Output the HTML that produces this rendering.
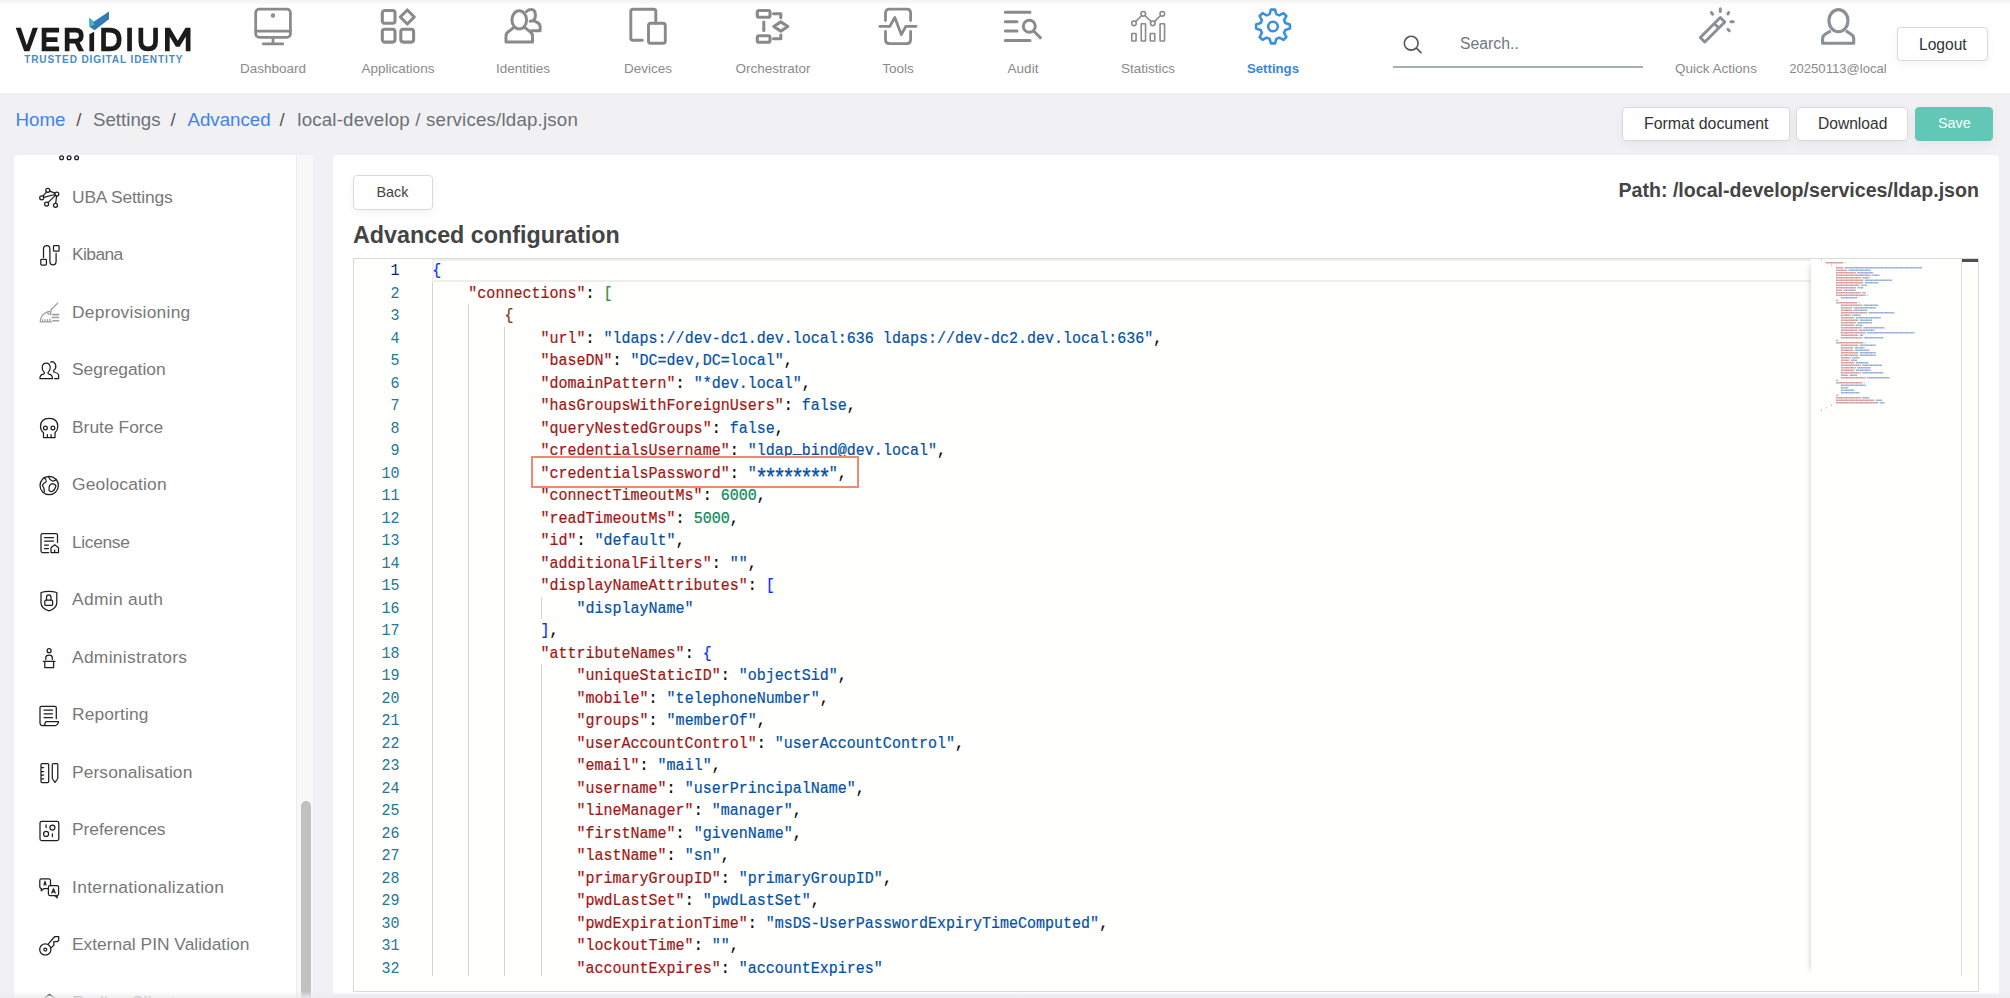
<!DOCTYPE html><html><head><meta charset="utf-8"><title>Advanced configuration</title><style>
*{box-sizing:border-box;margin:0;padding:0}
html,body{width:2010px;height:998px;overflow:hidden;background:#f1f1f3;font-family:"Liberation Sans",sans-serif;position:relative}
.a{position:absolute;white-space:pre;line-height:1}
svg{position:absolute;overflow:visible}
.btn{position:absolute;background:#fff;border:1px solid #d9d9d9;border-radius:4px;box-shadow:0 3px 10px rgba(0,0,0,0.05)}
.code{position:absolute;left:0;white-space:pre;font-family:"Liberation Mono",monospace;font-size:15.03px;line-height:22.5px;height:22.5px;color:#000;transform:scaleY(1.1);transform-origin:0 16px;-webkit-text-stroke:0.2px}
.lnum{position:absolute;left:0;width:46px;text-align:right;font-family:"Liberation Mono",monospace;font-size:15.03px;line-height:22.5px;height:22.5px;color:#237893;transform:scaleY(1.1);transform-origin:0 16px}
.k{color:#a31515}.s{color:#0451a5}.n{color:#098658}.b1{color:#0431fa}.b2{color:#319331}.b3{color:#7b3814}
.nl{position:absolute;top:61.5px;width:125px;text-align:center;font-size:13.5px;line-height:1;color:#8a8a8a}
.si{position:absolute;left:72px;font-size:17.4px;line-height:1;color:#787878;white-space:pre}
</style></head><body>
<div class="a" style="left:0;top:0;width:2010px;height:93px;background:linear-gradient(#f4f4f4 0px,#f5f5f5 1.5px,#fafafa 3.5px,#fff 5.5px)"></div>
<svg style="left:0;top:0" width="200" height="70" viewBox="0 0 200 70">
<g fill="none" stroke="#1b1b1b" stroke-width="4.7" stroke-linejoin="miter" stroke-linecap="butt">
<path d="M44.05,27.7 V51.3 M41.7,30.05 H59.1 M41.7,39.6 H57.5 M41.7,48.95 H59.1"/>
<path d="M67.15,51.3 V30.05 H75.5 Q81.3,30.05 81.3,35.6 Q81.3,41.2 75.5,41.2 H67.15"/>
<path d="M129.55,27.7 V51.3"/>
<path d="M103.55,27.7 V51.3 M101.2,30.05 H109.5 Q119.15,30.05 119.15,39.5 Q119.15,48.95 109.5,48.95 H101.2"/>
<path d="M140.85,27.7 V41.5 Q140.85,48.95 148.2,48.95 Q155.55,48.95 155.55,41.5 V27.7"/>
</g>
<g fill="#1b1b1b">
<polygon points="15.7,27.7 20.9,27.7 26.8,45.2 32.7,27.7 37.9,27.7 29.4,51.3 24.2,51.3"/>
<polygon points="73.5,40.5 78.6,40.5 84,51.3 78.6,51.3"/>
<polygon points="165,51.3 165,27.7 170,27.7 177.75,40.8 185.5,27.7 190.5,27.7 190.5,51.3 185.8,51.3 185.8,36.5 179.6,46.8 175.9,46.8 169.7,36.5 169.7,51.3"/>
<polygon points="89.4,34.2 94.1,31.8 94.1,51.3 89.4,51.3"/>
</g>
<polygon fill="#4fb2c4" points="89,17.6 94,21.6 94,24.5 89.2,26.5"/>
<polygon fill="#2f7cb6" points="94,21.6 109,11.6 109,19.2 94.6,30.3 89.2,26.5 94,24.5"/>
<text x="24.2" y="62.7" font-family="Liberation Sans" font-weight="bold" font-size="10.1" fill="#4a8cc2" letter-spacing="0.85">TRUSTED DIGITAL IDENTITY</text>
</svg>
<svg style="left:254px;top:8px" width="40" height="38" viewBox="0 0 40 38"><g fill="none" stroke="#8a8a8a" stroke-width="2.75" stroke-linecap="round" stroke-linejoin="round"><rect x="1.7" y="1.2" width="34.7" height="28.2" rx="3.5"/><path d="M1.7,23 H36.4 M19,29.4 V35.8 M9.2,35.8 H28.8"/><circle cx="19" cy="7.5" r="0.8" fill="#8a8a8a"/></g></svg>
<div class="nl" style="left:210.5px">Dashboard</div>
<svg style="left:379px;top:8px" width="40" height="38" viewBox="0 0 40 38"><g fill="none" stroke="#8a8a8a" stroke-width="3.1" stroke-linecap="round" stroke-linejoin="round"><rect x="3.3" y="2.5" width="12.7" height="12.8" rx="2.5"/><rect x="3.3" y="21.3" width="12.7" height="12.8" rx="2.5"/><rect x="21.8" y="21.3" width="12.8" height="12.8" rx="2.5"/><path d="M28.3,2 L35.3,9 L28.3,16 L21.3,9 Z"/></g></svg>
<div class="nl" style="left:335.5px">Applications</div>
<svg style="left:504px;top:8px" width="40" height="38" viewBox="0 0 40 38"><g fill="none" stroke="#8a8a8a" stroke-width="3.0" stroke-linecap="round" stroke-linejoin="round"><ellipse cx="15.25" cy="11.9" rx="7.3" ry="9.1"/><path d="M9.6,19.6 L4.6,23.6 Q2,25.3 2,28.3 V34.1 H28.5 V28.3 Q28.5,25.3 25.9,23.6 L20.9,19.6 M22.6,3.4 Q24.6,1.5 27.2,1.5 Q31.4,1.5 31.4,7.4 Q31.4,13 26.2,13.3 M29.4,12.6 L33.6,14.6 Q36.1,16 36.1,18.6 V22.8 H27"/></g></svg>
<div class="nl" style="left:460.5px">Identities</div>
<svg style="left:629px;top:8px" width="40" height="38" viewBox="0 0 40 38"><g fill="none" stroke="#8a8a8a" stroke-width="2.9" stroke-linecap="round" stroke-linejoin="round"><path d="M13.3,32.3 H4.1 Q1.8,32.3 1.8,30 V3.6 Q1.8,1.3 4.1,1.3 H24.5 Q26.8,1.3 26.8,3.6 V15.3"/><rect x="19.5" y="15.3" width="16.8" height="20" rx="2.4"/></g></svg>
<div class="nl" style="left:585.5px">Devices</div>
<svg style="left:754px;top:8px" width="40" height="38" viewBox="0 0 40 38"><g fill="none" stroke="#8a8a8a" stroke-width="3.1" stroke-linecap="round" stroke-linejoin="round"><rect x="3.3" y="2.5" width="12.7" height="6.8" rx="1.8"/><rect x="3.3" y="27.8" width="12.7" height="6.5" rx="1.8"/><path d="M9.8,14 V22.5 M19.5,5.8 H26.8 V9.8 M19.5,30.8 H26.8 V27 M19.8,18.5 L26.8,13.9 L33.8,18.5 L26.8,23.1 Z"/></g></svg>
<div class="nl" style="left:710.5px">Orchestrator</div>
<svg style="left:879px;top:8px" width="40" height="38" viewBox="0 0 40 38"><g fill="none" stroke="#8a8a8a" stroke-width="2.8" stroke-linecap="round" stroke-linejoin="round"><path d="M6.5,12.5 V5 Q6.5,1.2 10.3,1.2 H27.8 Q31.6,1.2 31.6,5 V12.5 M6.5,23.5 V31.8 Q6.5,35.6 10.3,35.6 H27.8 Q31.6,35.6 31.6,31.8 V23.5 M0.8,18.3 H10.8 L15.8,9.5 L22.3,26.6 L26.8,18.3 H37.1"/></g></svg>
<div class="nl" style="left:835.5px">Tools</div>
<svg style="left:1004px;top:8px" width="40" height="38" viewBox="0 0 40 38"><g fill="none" stroke="#8a8a8a" stroke-width="3.0" stroke-linecap="round" stroke-linejoin="round"><path d="M1.3,4.3 H26 M1.3,13.8 H13 M1.3,23 H13 M1.3,32.6 H26 M30.6,24 L36.3,29.6"/><circle cx="25.3" cy="18.3" r="6"/></g></svg>
<div class="nl" style="left:960.5px">Audit</div>
<svg style="left:1129px;top:8px" width="40" height="38" viewBox="0 0 40 38"><g fill="none" stroke="#8a8a8a" stroke-width="1.6" stroke-linecap="round" stroke-linejoin="round"><rect x="2.75" y="25.55" width="4.3" height="7.5" rx="0.5"/><rect x="12.25" y="15.75" width="4.3" height="17.3" rx="0.5"/><rect x="21.25" y="25.55" width="4.5" height="7.5" rx="0.5"/><rect x="31.05" y="15.75" width="4.5" height="17.3" rx="0.5"/><circle cx="5" cy="15.3" r="2.3"/><circle cx="14.3" cy="5.8" r="2.3"/><circle cx="23.8" cy="15.3" r="2.3"/><circle cx="33.3" cy="5.8" r="2.3"/><path d="M6.6,13.6 L12.7,7.5 M15.9,7.5 L22.2,13.6 M25.4,13.6 L31.7,7.5"/></g></svg>
<div class="nl" style="left:1085.5px">Statistics</div>
<svg style="left:1254px;top:8px" width="38" height="38" viewBox="0 0 38 38"><g transform="translate(0,-0.5)" fill="none" stroke="#3b8fe0" stroke-width="2.6" stroke-linejoin="round"><path d="M15.59,6.66 L16.96,2.12 L21.04,2.12 L22.41,6.66 L25.31,7.86 L29.50,5.63 L32.37,8.50 L30.14,12.69 L31.34,15.59 L35.88,16.96 L35.88,21.04 L31.34,22.41 L30.14,25.31 L32.37,29.50 L29.50,32.37 L25.31,30.14 L22.41,31.34 L21.04,35.88 L16.96,35.88 L15.59,31.34 L12.69,30.14 L8.50,32.37 L5.63,29.50 L7.86,25.31 L6.66,22.41 L2.12,21.04 L2.12,16.96 L6.66,15.59 L7.86,12.69 L5.63,8.50 L8.50,5.63 L12.69,7.86 Z"/><circle cx="19" cy="19" r="4.8"/></g></svg>
<div class="nl" style="left:1210.5px;color:#3b86d8;font-weight:bold;font-size:13.2px">Settings</div>
<svg style="left:1403px;top:35px" width="20" height="19" viewBox="0 0 20 19"><g fill="none" stroke="#555" stroke-width="1.6" stroke-linecap="round"><circle cx="8.2" cy="8.2" r="6.9"/><path d="M13.4,13.2 L18,17.6"/></g></svg>
<div class="a" style="left:1460px;top:35.5px;font-size:15.8px;color:#6f7780">Search..</div>
<div class="a" style="left:1393px;top:66.3px;width:250px;height:2px;background:#a7afaf"></div>
<svg style="left:1697px;top:8px" width="40" height="38" viewBox="0 0 40 38"><g fill="none" stroke="#8a9096" stroke-width="3" stroke-linecap="round" stroke-linejoin="round"><path d="M23.3,9.5 L27.8,14 L7.8,34 L3.3,29.5 Z M17.3,15.5 L21.8,20"/><path d="M23.3,0.8 V3.6 M14.3,4.6 L15.7,6.2 M31.7,4.6 L30.9,6 M33.9,13.8 H36.3 M30.9,21.3 L32.3,22.7"/></g></svg>
<div class="nl" style="left:1653.5px">Quick Actions</div>
<svg style="left:1820px;top:8px" width="38" height="38" viewBox="0 0 38 38"><g fill="none" stroke="#8a9096" stroke-width="3.1" stroke-linejoin="round"><ellipse cx="18.45" cy="12.65" rx="9.5" ry="11"/><path d="M10.8,22.8 L5.5,26 Q2.6,27.8 2.6,30.5 V35.2 H33.7 V30.5 Q33.7,27.8 30.8,26 L25.8,22.8"/></g></svg>
<div class="nl" style="left:1775.5px;font-size:13.1px">20250113@local</div>
<div class="btn" style="left:1897px;top:27px;width:91px;height:34px"></div>
<div class="a" style="left:1919px;top:36.5px;font-size:15.6px;color:#333">Logout</div>
<div class="a" style="left:15.5px;top:110.5px;font-size:18.7px;color:#3d83ee;letter-spacing:0px">Home</div>
<div class="a" style="left:76.2px;top:110.5px;font-size:18.7px;color:#555;letter-spacing:0px">/</div>
<div class="a" style="left:93px;top:110.5px;font-size:18.7px;color:#6b7079;letter-spacing:0px">Settings</div>
<div class="a" style="left:170.5px;top:110.5px;font-size:18.7px;color:#555;letter-spacing:0px">/</div>
<div class="a" style="left:187.5px;top:110.5px;font-size:18.7px;color:#3d83ee;letter-spacing:0px">Advanced</div>
<div class="a" style="left:279.5px;top:110.5px;font-size:18.7px;color:#555;letter-spacing:0px">/</div>
<div class="a" style="left:297.3px;top:110.5px;font-size:18.7px;color:#6b7079;letter-spacing:0.19px">local-develop / services/ldap.json</div>
<div class="btn" style="left:1622px;top:107px;width:168px;height:34px"></div>
<div class="a" style="left:1644px;top:116px;font-size:15.9px;color:#333">Format document</div>
<div class="btn" style="left:1796px;top:107px;width:112px;height:34px"></div>
<div class="a" style="left:1818px;top:116px;font-size:15.6px;color:#333">Download</div>
<div class="btn" style="left:1915px;top:107px;width:78px;height:34px;background:#62c8b5;border-color:#62c8b5"></div>
<div class="a" style="left:1938px;top:116px;font-size:14.4px;color:#fff">Save</div>
<div class="a" style="left:14px;top:155px;width:282px;height:843px;background:#fff;border-radius:4px 0 0 0;overflow:hidden">
</div>
<div class="a" style="left:295.5px;top:155px;width:1.5px;height:843px;background:#ededed"></div>
<div class="a" style="left:297px;top:155px;width:16px;height:843px;background:#f8f8f8"></div>
<div class="a" style="left:300.5px;top:801px;width:10px;height:210px;background:#c1c1c1;border-radius:5px"></div>
<div class="si" style="top:188.8px;letter-spacing:-0.164px">UBA Settings</div>
<svg style="left:34px;top:182.0px" width="30" height="30" viewBox="0 0 30 30"><g fill="none" stroke="#1e1e1e" stroke-width="1.25" stroke-linecap="round" stroke-linejoin="round"><circle cx="13.8" cy="8.3" r="2"/><circle cx="22.8" cy="12" r="2"/><circle cx="7.7" cy="15.8" r="2"/><circle cx="12.6" cy="22.1" r="2"/><circle cx="21.5" cy="23.3" r="2"/><path d="M15.7,9.1 L20.9,11.2 M8.9,14.2 L12.6,9.9 M9.7,15.3 L20.8,12.5 M14,20.6 L21.3,13.4 M21.7,21.3 L22.6,14"/></g></svg>
<div class="si" style="top:246.3px;letter-spacing:-0.58px">Kibana</div>
<svg style="left:34px;top:239.5px" width="30" height="30" viewBox="0 0 30 30"><g fill="none" stroke="#1e1e1e" stroke-width="1.25" stroke-linecap="round" stroke-linejoin="round"><rect x="6.8" y="19.3" width="5.6" height="5.8" rx="0.8"/><rect x="19.5" y="5.6" width="5.6" height="5.6" rx="0.8"/><path d="M9.5,17.4 V9 Q9.5,5.6 12.7,5.6 Q15.9,5.6 15.9,9 V21.3 Q15.9,24.9 19,24.9 Q22.1,24.9 22.1,21.3 V13.4"/></g></svg>
<div class="si" style="top:303.8px;letter-spacing:0.246px">Deprovisioning</div>
<svg style="left:34px;top:297.0px" width="30" height="30" viewBox="0 0 30 30"><g fill="none" stroke="#1e1e1e" stroke-width="1.25" stroke-linecap="round" stroke-linejoin="round"><g stroke="#a0a0a0"><path d="M6.2,24.8 Q6.3,17.3 14.2,14.6 M17,12.8 L23.6,6.2 M6.5,24.8 H17.6 M8.5,22.5 V24.8 M11,22.5 V24.8 M13.5,22.5 V24.8 M16,22 V24.8 M16.5,17.5 L17.3,13"/><circle cx="15.2" cy="15.8" r="1.5"/><path d="M18.5,17.6 H24.6 M18.3,20.5 H24.6 M19,23.8 H24.6" stroke-width="1.6"/></g></g></svg>
<div class="si" style="top:361.2px;letter-spacing:-0.02px">Segregation</div>
<svg style="left:34px;top:354.5px" width="30" height="30" viewBox="0 0 30 30"><g fill="none" stroke="#1e1e1e" stroke-width="1.25" stroke-linecap="round" stroke-linejoin="round"><path d="M6,23.6 Q5.6,19.8 9.5,19.1 Q10.9,18.6 10.1,17.1 Q8,15.2 8.2,12.2 Q8.5,8 12.2,8 Q15.9,8 16.2,12.2 Q16.3,15.2 14.3,17.1 Q13.5,18.6 15,19.1 Q18.5,19.8 18.5,23.6 Z M16.6,7.2 Q18.2,6 19.9,7.3 Q22.3,9.3 21.7,12.8 Q21.3,14.3 19.8,15.3 V17 Q24.3,18 24.6,20 V23.6 H20.6"/></g></svg>
<div class="si" style="top:418.7px;letter-spacing:0.02px">Brute Force</div>
<svg style="left:34px;top:412.0px" width="30" height="30" viewBox="0 0 30 30"><g fill="none" stroke="#1e1e1e" stroke-width="1.25" stroke-linecap="round" stroke-linejoin="round"><path d="M9.5,25.5 V20.8 Q6.5,18.3 6.5,14.5 Q6.5,6.3 15.2,6.3 Q23.8,6.3 23.8,14.5 Q23.8,18.3 21,20.8 V25.5 Z M13.4,22.5 V25.5 M17.1,22.5 V25.5"/><circle cx="11.4" cy="16" r="1.9"/><circle cx="18.9" cy="16" r="1.9"/></g></svg>
<div class="si" style="top:476.2px;letter-spacing:0.18px">Geolocation</div>
<svg style="left:34px;top:469.5px" width="30" height="30" viewBox="0 0 30 30"><g fill="none" stroke="#1e1e1e" stroke-width="1.25" stroke-linecap="round" stroke-linejoin="round"><circle cx="15.2" cy="15.5" r="9.2"/><path d="M10,7.3 Q12.6,9.6 12.2,11.8 Q9.2,13.2 8.4,15.3 Q10.6,17.8 10.4,21.8 M14.3,6.5 Q15.8,10 18.3,11 Q20.3,11.2 22.5,9.5 M15,20.2 Q14.6,14.2 18.4,13.6 Q21.5,14.2 22,16 Q20.2,21 18,21.5 Q15.6,21.7 15,20.2 Z"/></g></svg>
<div class="si" style="top:533.7px;letter-spacing:-0.35px">License</div>
<svg style="left:34px;top:527.0px" width="30" height="30" viewBox="0 0 30 30"><g fill="none" stroke="#1e1e1e" stroke-width="1.25" stroke-linecap="round" stroke-linejoin="round"><path d="M14.6,25.5 H8.5 Q7,25.5 7,24 V8 Q7,6.5 8.5,6.5 H22 Q23.5,6.5 23.5,8 V15.5 M10.5,10.5 H19.5 M10.5,14.2 H19.5 M10.5,18 H14.5 M10.5,21.5 H14.5 M17,25.5 V20.8 L20.7,17.8 L24.5,20.8 V25.5 Z M20.7,25.5 V23"/></g></svg>
<div class="si" style="top:591.2px;letter-spacing:0.322px">Admin auth</div>
<svg style="left:34px;top:584.5px" width="30" height="30" viewBox="0 0 30 30"><g fill="none" stroke="#1e1e1e" stroke-width="1.25" stroke-linecap="round" stroke-linejoin="round"><path d="M7,7.5 Q15,5.2 22.8,7.5 V18 Q22.5,23.5 15,25.8 Q7.3,23.5 7,18 Z M12.5,15 V12.5 Q12.5,9.8 14.7,9.8 Q17,9.8 17,12.5 V15"/><rect x="10.8" y="15.2" width="7.8" height="5.2" rx="1"/></g></svg>
<div class="si" style="top:648.6px;letter-spacing:0.3px">Administrators</div>
<svg style="left:34px;top:642.0px" width="30" height="30" viewBox="0 0 30 30"><g fill="none" stroke="#1e1e1e" stroke-width="1.25" stroke-linecap="round" stroke-linejoin="round"><circle cx="15.1" cy="8.7" r="2"/><path d="M11.8,17.5 V15.6 Q11.8,13 15.1,13 Q18.3,13 18.3,15.6 V17.5 M9.3,19.3 H21 M10.8,19.3 V25.5 H19.6 V19.3"/></g></svg>
<div class="si" style="top:706.1px;letter-spacing:0.137px">Reporting</div>
<svg style="left:34px;top:699.5px" width="30" height="30" viewBox="0 0 30 30"><g fill="none" stroke="#1e1e1e" stroke-width="1.25" stroke-linecap="round" stroke-linejoin="round"><path d="M6,23 V7.5 Q6,6.3 7.3,6.3 H21 Q22.3,6.3 22.3,7.5 V18.5 M10,10.2 H18.5 M10,13.8 H18.5 M10,17.5 H18.5 M11,24 Q11,21.5 12.5,21.5 H24 Q25,21.5 24.5,22.5 Q23.2,25.5 21.5,25.5 H8.5 Q6,25.5 6,23 M8.5,25.5 Q11,25.5 11,24"/></g></svg>
<div class="si" style="top:763.6px;letter-spacing:0.1px">Personalisation</div>
<svg style="left:34px;top:757.0px" width="30" height="30" viewBox="0 0 30 30"><g fill="none" stroke="#1e1e1e" stroke-width="1.25" stroke-linecap="round" stroke-linejoin="round"><rect x="7" y="6.5" width="7.7" height="19" rx="1"/><path d="M7.5,10.5 H9.6 M7.5,14.5 H9.6 M7.5,18.2 H9.6 M7.5,21.8 H9.6 M18.3,21.5 V7.5 Q18.3,6.5 19.3,6.5 H22.8 Q23.8,6.5 23.8,7.5 V21.5 L21,25.5 L18.3,21.5 Z"/></g></svg>
<div class="si" style="top:821.1px;letter-spacing:-0.02px">Preferences</div>
<svg style="left:34px;top:814.5px" width="30" height="30" viewBox="0 0 30 30"><g fill="none" stroke="#1e1e1e" stroke-width="1.25" stroke-linecap="round" stroke-linejoin="round"><rect x="6" y="6.3" width="18.8" height="19.3" rx="1.8"/><path d="M12.1,9.8 V12.5 M18.4,18.8 V21.6"/><circle cx="18.4" cy="12.5" r="2.5"/><circle cx="12.1" cy="18.9" r="2.5"/></g></svg>
<div class="si" style="top:878.6px;letter-spacing:0.316px">Internationalization</div>
<svg style="left:34px;top:872.0px" width="30" height="30" viewBox="0 0 30 30"><g fill="none" stroke="#1e1e1e" stroke-width="1.25" stroke-linecap="round" stroke-linejoin="round"><path d="M7.5,16.5 Q5.8,16.5 5.8,14.8 V8.5 Q5.8,6.8 7.5,6.8 H14.8 Q16.5,6.8 16.5,8.5 V13.2 M7.5,16.5 L7.2,18.8 L10,16.5 H14 M21,23.5 L23.2,25.8 L23,23.5 M17.8,21 L19.5,16.8 L21.2,21 M18.3,19.8 H20.7 M11,9.5 L10,13 M11,9.5 L12,13"/><rect x="14.4" y="13.7" width="10.2" height="9.8" rx="1.5"/></g></svg>
<div class="si" style="top:936.0px;letter-spacing:-0.009px">External PIN Validation</div>
<svg style="left:34px;top:929.5px" width="30" height="30" viewBox="0 0 30 30"><g fill="none" stroke="#1e1e1e" stroke-width="1.25" stroke-linecap="round" stroke-linejoin="round"><circle cx="11.3" cy="19.5" r="5.6"/><circle cx="11.3" cy="19.5" r="1.5"/><path d="M14,14.3 L20.8,6.5 H24.7 V10.2 L23.4,11.5 H19.8 V15.2 L17.3,17.6"/></g></svg>
<div class="si" style="top:993.5px;letter-spacing:0.0px">Radius Client</div>
<svg style="left:34px;top:987.0px" width="30" height="30" viewBox="0 0 30 30"><g fill="none" stroke="#1e1e1e" stroke-width="1.25" stroke-linecap="round" stroke-linejoin="round"><path d="M8,13 L15.5,7.3 L23,13"/></g></svg>
<svg style="left:55px;top:150px" width="30" height="12" viewBox="0 0 30 12"><g fill="none" stroke="#1e1e1e" stroke-width="1.3"><circle cx="6.6" cy="7.8" r="1.9"/><circle cx="14.1" cy="7.8" r="1.9"/><circle cx="21.6" cy="7.8" r="1.9"/></g></svg>
<div class="a" style="left:14px;top:150px;width:282px;height:5px;background:#f1f1f3"></div>
<div class="a" style="left:333px;top:155px;width:1666px;height:839px;background:#fff;border-radius:4px 4px 0 0"></div>
<div class="btn" style="left:353px;top:175px;width:80px;height:35px"></div>
<div class="a" style="left:376.5px;top:185px;font-size:14.4px;color:#444">Back</div>
<div class="a" style="left:353px;top:224px;font-size:23.3px;font-weight:bold;color:#444">Advanced configuration</div>
<div class="a" style="left:1618.5px;top:180.7px;font-size:19.6px;font-weight:bold;color:#444">Path: /local-develop/services/ldap.json</div>
<div class="a" style="left:353px;top:258px;width:1626px;height:734px;border:1px solid #d9d9d9;background:#fffffe;overflow:hidden">
<div class="a" style="left:0;top:0;width:1625px;height:716.5px;overflow:hidden">
<div class="a" style="left:78.3px;top:0.2px;width:1400px;height:22.5px;border:2px solid #eeeeee"></div>
<div class="a" style="left:78.00px;top:22.70px;width:1px;height:720.00px;background:#d3d3d3"></div>
<div class="a" style="left:114.00px;top:45.20px;width:1px;height:697.50px;background:#d3d3d3"></div>
<div class="a" style="left:150.00px;top:67.70px;width:1px;height:675.00px;background:#d3d3d3"></div>
<div class="a" style="left:187.00px;top:337.70px;width:1px;height:22.50px;background:#d3d3d3"></div>
<div class="a" style="left:187.00px;top:405.20px;width:1px;height:315.00px;background:#d3d3d3"></div>
<div class="lnum" style="top:1.20px;width:45.5px;color:#0b216f">1</div>
<div class="lnum" style="top:23.70px;width:45.5px;color:#237893">2</div>
<div class="lnum" style="top:46.20px;width:45.5px;color:#237893">3</div>
<div class="lnum" style="top:68.70px;width:45.5px;color:#237893">4</div>
<div class="lnum" style="top:91.20px;width:45.5px;color:#237893">5</div>
<div class="lnum" style="top:113.70px;width:45.5px;color:#237893">6</div>
<div class="lnum" style="top:136.20px;width:45.5px;color:#237893">7</div>
<div class="lnum" style="top:158.70px;width:45.5px;color:#237893">8</div>
<div class="lnum" style="top:181.20px;width:45.5px;color:#237893">9</div>
<div class="lnum" style="top:203.70px;width:45.5px;color:#237893">10</div>
<div class="lnum" style="top:226.20px;width:45.5px;color:#237893">11</div>
<div class="lnum" style="top:248.70px;width:45.5px;color:#237893">12</div>
<div class="lnum" style="top:271.20px;width:45.5px;color:#237893">13</div>
<div class="lnum" style="top:293.70px;width:45.5px;color:#237893">14</div>
<div class="lnum" style="top:316.20px;width:45.5px;color:#237893">15</div>
<div class="lnum" style="top:338.70px;width:45.5px;color:#237893">16</div>
<div class="lnum" style="top:361.20px;width:45.5px;color:#237893">17</div>
<div class="lnum" style="top:383.70px;width:45.5px;color:#237893">18</div>
<div class="lnum" style="top:406.20px;width:45.5px;color:#237893">19</div>
<div class="lnum" style="top:428.70px;width:45.5px;color:#237893">20</div>
<div class="lnum" style="top:451.20px;width:45.5px;color:#237893">21</div>
<div class="lnum" style="top:473.70px;width:45.5px;color:#237893">22</div>
<div class="lnum" style="top:496.20px;width:45.5px;color:#237893">23</div>
<div class="lnum" style="top:518.70px;width:45.5px;color:#237893">24</div>
<div class="lnum" style="top:541.20px;width:45.5px;color:#237893">25</div>
<div class="lnum" style="top:563.70px;width:45.5px;color:#237893">26</div>
<div class="lnum" style="top:586.20px;width:45.5px;color:#237893">27</div>
<div class="lnum" style="top:608.70px;width:45.5px;color:#237893">28</div>
<div class="lnum" style="top:631.20px;width:45.5px;color:#237893">29</div>
<div class="lnum" style="top:653.70px;width:45.5px;color:#237893">30</div>
<div class="lnum" style="top:676.20px;width:45.5px;color:#237893">31</div>
<div class="lnum" style="top:698.70px;width:45.5px;color:#237893">32</div>
<div class="lnum" style="top:721.20px;width:45.5px;color:#237893">33</div>
<div class="code" style="left:78.3px;top:1.20px"><span class="b1">{</span></div>
<div class="code" style="left:78.3px;top:23.70px">    <span class="k">&quot;connections&quot;</span>: <span class="b2">[</span></div>
<div class="code" style="left:78.3px;top:46.20px">        <span class="b3">{</span></div>
<div class="code" style="left:78.3px;top:68.70px">            <span class="k">&quot;url&quot;</span>: <span class="s">&quot;ldaps://dev-dc1.dev.local:636 ldaps://dev-dc2.dev.local:636&quot;</span>,</div>
<div class="code" style="left:78.3px;top:91.20px">            <span class="k">&quot;baseDN&quot;</span>: <span class="s">&quot;DC=dev,DC=local&quot;</span>,</div>
<div class="code" style="left:78.3px;top:113.70px">            <span class="k">&quot;domainPattern&quot;</span>: <span class="s">&quot;*dev.local&quot;</span>,</div>
<div class="code" style="left:78.3px;top:136.20px">            <span class="k">&quot;hasGroupsWithForeignUsers&quot;</span>: <span class="s">false</span>,</div>
<div class="code" style="left:78.3px;top:158.70px">            <span class="k">&quot;queryNestedGroups&quot;</span>: <span class="s">false</span>,</div>
<div class="code" style="left:78.3px;top:181.20px">            <span class="k">&quot;credentialsUsername&quot;</span>: <span class="s">&quot;ldap<span style="position:relative;top:-2px">_</span>bind@dev.local&quot;</span>,</div>
<div class="code" style="left:78.3px;top:203.70px">            <span class="k">&quot;credentialsPassword&quot;</span>: <span class="s">&quot;<span style="display:inline-block;transform:translateY(5.5px) scale(1.4)">*</span><span style="display:inline-block;transform:translateY(5.5px) scale(1.4)">*</span><span style="display:inline-block;transform:translateY(5.5px) scale(1.4)">*</span><span style="display:inline-block;transform:translateY(5.5px) scale(1.4)">*</span><span style="display:inline-block;transform:translateY(5.5px) scale(1.4)">*</span><span style="display:inline-block;transform:translateY(5.5px) scale(1.4)">*</span><span style="display:inline-block;transform:translateY(5.5px) scale(1.4)">*</span><span style="display:inline-block;transform:translateY(5.5px) scale(1.4)">*</span>&quot;</span>,</div>
<div class="code" style="left:78.3px;top:226.20px">            <span class="k">&quot;connectTimeoutMs&quot;</span>: <span class="n">6000</span>,</div>
<div class="code" style="left:78.3px;top:248.70px">            <span class="k">&quot;readTimeoutMs&quot;</span>: <span class="n">5000</span>,</div>
<div class="code" style="left:78.3px;top:271.20px">            <span class="k">&quot;id&quot;</span>: <span class="s">&quot;default&quot;</span>,</div>
<div class="code" style="left:78.3px;top:293.70px">            <span class="k">&quot;additionalFilters&quot;</span>: <span class="s">&quot;&quot;</span>,</div>
<div class="code" style="left:78.3px;top:316.20px">            <span class="k">&quot;displayNameAttributes&quot;</span>: <span class="b1">[</span></div>
<div class="code" style="left:78.3px;top:338.70px">                <span class="s">&quot;displayName&quot;</span></div>
<div class="code" style="left:78.3px;top:361.20px">            <span class="b1">]</span>,</div>
<div class="code" style="left:78.3px;top:383.70px">            <span class="k">&quot;attributeNames&quot;</span>: <span class="b1">{</span></div>
<div class="code" style="left:78.3px;top:406.20px">                <span class="k">&quot;uniqueStaticID&quot;</span>: <span class="s">&quot;objectSid&quot;</span>,</div>
<div class="code" style="left:78.3px;top:428.70px">                <span class="k">&quot;mobile&quot;</span>: <span class="s">&quot;telephoneNumber&quot;</span>,</div>
<div class="code" style="left:78.3px;top:451.20px">                <span class="k">&quot;groups&quot;</span>: <span class="s">&quot;memberOf&quot;</span>,</div>
<div class="code" style="left:78.3px;top:473.70px">                <span class="k">&quot;userAccountControl&quot;</span>: <span class="s">&quot;userAccountControl&quot;</span>,</div>
<div class="code" style="left:78.3px;top:496.20px">                <span class="k">&quot;email&quot;</span>: <span class="s">&quot;mail&quot;</span>,</div>
<div class="code" style="left:78.3px;top:518.70px">                <span class="k">&quot;username&quot;</span>: <span class="s">&quot;userPrincipalName&quot;</span>,</div>
<div class="code" style="left:78.3px;top:541.20px">                <span class="k">&quot;lineManager&quot;</span>: <span class="s">&quot;manager&quot;</span>,</div>
<div class="code" style="left:78.3px;top:563.70px">                <span class="k">&quot;firstName&quot;</span>: <span class="s">&quot;givenName&quot;</span>,</div>
<div class="code" style="left:78.3px;top:586.20px">                <span class="k">&quot;lastName&quot;</span>: <span class="s">&quot;sn&quot;</span>,</div>
<div class="code" style="left:78.3px;top:608.70px">                <span class="k">&quot;primaryGroupID&quot;</span>: <span class="s">&quot;primaryGroupID&quot;</span>,</div>
<div class="code" style="left:78.3px;top:631.20px">                <span class="k">&quot;pwdLastSet&quot;</span>: <span class="s">&quot;pwdLastSet&quot;</span>,</div>
<div class="code" style="left:78.3px;top:653.70px">                <span class="k">&quot;pwdExpirationTime&quot;</span>: <span class="s">&quot;msDS-UserPasswordExpiryTimeComputed&quot;</span>,</div>
<div class="code" style="left:78.3px;top:676.20px">                <span class="k">&quot;lockoutTime&quot;</span>: <span class="s">&quot;&quot;</span>,</div>
<div class="code" style="left:78.3px;top:698.70px">                <span class="k">&quot;accountExpires&quot;</span>: <span class="s">&quot;accountExpires&quot;</span></div>
<div class="code" style="left:78.3px;top:721.20px">            <span class="b1">}</span>,</div>
</div>
<div class="a" style="left:1456.8px;top:0;width:150.2px;height:716.5px;background:#fffffe;box-shadow:-6px 0 6px -6px #c8c8c8"></div>
<svg style="left:1466.80px;top:0px" width="140" height="160" viewBox="0 0 140 160"><g stroke-width="1.5" stroke-dasharray="1.05 0.2" fill="none" opacity="0.75"><path d="M0.00,1.25h1.25" stroke="#3f5ff5" stroke-opacity="0.55"/><path d="M5.00,3.75h16.25" stroke="#b54a4a" stroke-opacity="0.8"/><path d="M21.25,3.75h1.25" stroke="#333" stroke-opacity="0.55"/><path d="M23.75,3.75h1.25" stroke="#5a9a5a" stroke-opacity="0.55"/><path d="M10.00,6.25h1.25" stroke="#8a5a3a" stroke-opacity="0.55"/><path d="M15.00,8.75h6.25" stroke="#b54a4a" stroke-opacity="0.8"/><path d="M21.25,8.75h1.25" stroke="#333" stroke-opacity="0.55"/><path d="M23.75,8.75h76.25" stroke="#3d6fb5" stroke-opacity="0.8"/><path d="M100.00,8.75h1.25" stroke="#333" stroke-opacity="0.55"/><path d="M15.00,11.25h10.00" stroke="#b54a4a" stroke-opacity="0.8"/><path d="M25.00,11.25h1.25" stroke="#333" stroke-opacity="0.55"/><path d="M27.50,11.25h21.25" stroke="#3d6fb5" stroke-opacity="0.8"/><path d="M48.75,11.25h1.25" stroke="#333" stroke-opacity="0.55"/><path d="M15.00,13.75h18.75" stroke="#b54a4a" stroke-opacity="0.8"/><path d="M33.75,13.75h1.25" stroke="#333" stroke-opacity="0.55"/><path d="M36.25,13.75h15.00" stroke="#3d6fb5" stroke-opacity="0.8"/><path d="M51.25,13.75h1.25" stroke="#333" stroke-opacity="0.55"/><path d="M15.00,16.25h33.75" stroke="#b54a4a" stroke-opacity="0.8"/><path d="M48.75,16.25h1.25" stroke="#333" stroke-opacity="0.55"/><path d="M51.25,16.25h6.25" stroke="#3d6fb5" stroke-opacity="0.8"/><path d="M57.50,16.25h1.25" stroke="#333" stroke-opacity="0.55"/><path d="M15.00,18.75h23.75" stroke="#b54a4a" stroke-opacity="0.8"/><path d="M38.75,18.75h1.25" stroke="#333" stroke-opacity="0.55"/><path d="M41.25,18.75h6.25" stroke="#3d6fb5" stroke-opacity="0.8"/><path d="M47.50,18.75h1.25" stroke="#333" stroke-opacity="0.55"/><path d="M15.00,21.25h26.25" stroke="#b54a4a" stroke-opacity="0.8"/><path d="M41.25,21.25h1.25" stroke="#333" stroke-opacity="0.55"/><path d="M43.75,21.25h26.25" stroke="#3d6fb5" stroke-opacity="0.8"/><path d="M70.00,21.25h1.25" stroke="#333" stroke-opacity="0.55"/><path d="M15.00,23.75h26.25" stroke="#b54a4a" stroke-opacity="0.8"/><path d="M41.25,23.75h1.25" stroke="#333" stroke-opacity="0.55"/><path d="M43.75,23.75h12.50" stroke="#3d6fb5" stroke-opacity="0.8"/><path d="M56.25,23.75h1.25" stroke="#333" stroke-opacity="0.55"/><path d="M15.00,26.25h22.50" stroke="#b54a4a" stroke-opacity="0.8"/><path d="M37.50,26.25h1.25" stroke="#333" stroke-opacity="0.55"/><path d="M40.00,26.25h5.00" stroke="#3f9a72" stroke-opacity="0.8"/><path d="M45.00,26.25h1.25" stroke="#333" stroke-opacity="0.55"/><path d="M15.00,28.75h18.75" stroke="#b54a4a" stroke-opacity="0.8"/><path d="M33.75,28.75h1.25" stroke="#333" stroke-opacity="0.55"/><path d="M36.25,28.75h5.00" stroke="#3f9a72" stroke-opacity="0.8"/><path d="M41.25,28.75h1.25" stroke="#333" stroke-opacity="0.55"/><path d="M15.00,31.25h5.00" stroke="#b54a4a" stroke-opacity="0.8"/><path d="M20.00,31.25h1.25" stroke="#333" stroke-opacity="0.55"/><path d="M22.50,31.25h11.25" stroke="#3d6fb5" stroke-opacity="0.8"/><path d="M33.75,31.25h1.25" stroke="#333" stroke-opacity="0.55"/><path d="M15.00,33.75h23.75" stroke="#b54a4a" stroke-opacity="0.8"/><path d="M38.75,33.75h1.25" stroke="#333" stroke-opacity="0.55"/><path d="M41.25,33.75h2.50" stroke="#3d6fb5" stroke-opacity="0.8"/><path d="M43.75,33.75h1.25" stroke="#333" stroke-opacity="0.55"/><path d="M15.00,36.25h28.75" stroke="#b54a4a" stroke-opacity="0.8"/><path d="M43.75,36.25h1.25" stroke="#333" stroke-opacity="0.55"/><path d="M46.25,36.25h1.25" stroke="#3f5ff5" stroke-opacity="0.55"/><path d="M20.00,38.75h16.25" stroke="#3d6fb5" stroke-opacity="0.8"/><path d="M15.00,41.25h1.25" stroke="#3f5ff5" stroke-opacity="0.55"/><path d="M16.25,41.25h1.25" stroke="#333" stroke-opacity="0.55"/><path d="M15.00,43.75h20.00" stroke="#b54a4a" stroke-opacity="0.8"/><path d="M35.00,43.75h1.25" stroke="#333" stroke-opacity="0.55"/><path d="M37.50,43.75h1.25" stroke="#3f5ff5" stroke-opacity="0.55"/><path d="M20.00,46.25h20.00" stroke="#b54a4a" stroke-opacity="0.8"/><path d="M40.00,46.25h1.25" stroke="#333" stroke-opacity="0.55"/><path d="M42.50,46.25h13.75" stroke="#3d6fb5" stroke-opacity="0.8"/><path d="M56.25,46.25h1.25" stroke="#333" stroke-opacity="0.55"/><path d="M20.00,48.75h10.00" stroke="#b54a4a" stroke-opacity="0.8"/><path d="M30.00,48.75h1.25" stroke="#333" stroke-opacity="0.55"/><path d="M32.50,48.75h21.25" stroke="#3d6fb5" stroke-opacity="0.8"/><path d="M53.75,48.75h1.25" stroke="#333" stroke-opacity="0.55"/><path d="M20.00,51.25h10.00" stroke="#b54a4a" stroke-opacity="0.8"/><path d="M30.00,51.25h1.25" stroke="#333" stroke-opacity="0.55"/><path d="M32.50,51.25h12.50" stroke="#3d6fb5" stroke-opacity="0.8"/><path d="M45.00,51.25h1.25" stroke="#333" stroke-opacity="0.55"/><path d="M20.00,53.75h25.00" stroke="#b54a4a" stroke-opacity="0.8"/><path d="M45.00,53.75h1.25" stroke="#333" stroke-opacity="0.55"/><path d="M47.50,53.75h25.00" stroke="#3d6fb5" stroke-opacity="0.8"/><path d="M72.50,53.75h1.25" stroke="#333" stroke-opacity="0.55"/><path d="M20.00,56.25h8.75" stroke="#b54a4a" stroke-opacity="0.8"/><path d="M28.75,56.25h1.25" stroke="#333" stroke-opacity="0.55"/><path d="M31.25,56.25h7.50" stroke="#3d6fb5" stroke-opacity="0.8"/><path d="M38.75,56.25h1.25" stroke="#333" stroke-opacity="0.55"/><path d="M20.00,58.75h12.50" stroke="#b54a4a" stroke-opacity="0.8"/><path d="M32.50,58.75h1.25" stroke="#333" stroke-opacity="0.55"/><path d="M35.00,58.75h23.75" stroke="#3d6fb5" stroke-opacity="0.8"/><path d="M58.75,58.75h1.25" stroke="#333" stroke-opacity="0.55"/><path d="M20.00,61.25h16.25" stroke="#b54a4a" stroke-opacity="0.8"/><path d="M36.25,61.25h1.25" stroke="#333" stroke-opacity="0.55"/><path d="M38.75,61.25h11.25" stroke="#3d6fb5" stroke-opacity="0.8"/><path d="M50.00,61.25h1.25" stroke="#333" stroke-opacity="0.55"/><path d="M20.00,63.75h13.75" stroke="#b54a4a" stroke-opacity="0.8"/><path d="M33.75,63.75h1.25" stroke="#333" stroke-opacity="0.55"/><path d="M36.25,63.75h13.75" stroke="#3d6fb5" stroke-opacity="0.8"/><path d="M50.00,63.75h1.25" stroke="#333" stroke-opacity="0.55"/><path d="M20.00,66.25h12.50" stroke="#b54a4a" stroke-opacity="0.8"/><path d="M32.50,66.25h1.25" stroke="#333" stroke-opacity="0.55"/><path d="M35.00,66.25h5.00" stroke="#3d6fb5" stroke-opacity="0.8"/><path d="M40.00,66.25h1.25" stroke="#333" stroke-opacity="0.55"/><path d="M20.00,68.75h20.00" stroke="#b54a4a" stroke-opacity="0.8"/><path d="M40.00,68.75h1.25" stroke="#333" stroke-opacity="0.55"/><path d="M42.50,68.75h20.00" stroke="#3d6fb5" stroke-opacity="0.8"/><path d="M62.50,68.75h1.25" stroke="#333" stroke-opacity="0.55"/><path d="M20.00,71.25h15.00" stroke="#b54a4a" stroke-opacity="0.8"/><path d="M35.00,71.25h1.25" stroke="#333" stroke-opacity="0.55"/><path d="M37.50,71.25h15.00" stroke="#3d6fb5" stroke-opacity="0.8"/><path d="M52.50,71.25h1.25" stroke="#333" stroke-opacity="0.55"/><path d="M20.00,73.75h23.75" stroke="#b54a4a" stroke-opacity="0.8"/><path d="M43.75,73.75h1.25" stroke="#333" stroke-opacity="0.55"/><path d="M46.25,73.75h46.25" stroke="#3d6fb5" stroke-opacity="0.8"/><path d="M92.50,73.75h1.25" stroke="#333" stroke-opacity="0.55"/><path d="M20.00,76.25h16.25" stroke="#b54a4a" stroke-opacity="0.8"/><path d="M36.25,76.25h1.25" stroke="#333" stroke-opacity="0.55"/><path d="M38.75,76.25h2.50" stroke="#3d6fb5" stroke-opacity="0.8"/><path d="M41.25,76.25h1.25" stroke="#333" stroke-opacity="0.55"/><path d="M20.00,78.75h20.00" stroke="#b54a4a" stroke-opacity="0.8"/><path d="M40.00,78.75h1.25" stroke="#333" stroke-opacity="0.55"/><path d="M42.50,78.75h20.00" stroke="#3d6fb5" stroke-opacity="0.8"/><path d="M15.00,81.25h1.25" stroke="#3f5ff5" stroke-opacity="0.55"/><path d="M16.25,81.25h1.25" stroke="#333" stroke-opacity="0.55"/><path d="M15.00,83.75h26.25" stroke="#b54a4a" stroke-opacity="0.8"/><path d="M41.25,83.75h1.25" stroke="#333" stroke-opacity="0.55"/><path d="M43.75,83.75h1.25" stroke="#3f5ff5" stroke-opacity="0.55"/><path d="M20.00,86.25h16.25" stroke="#b54a4a" stroke-opacity="0.8"/><path d="M36.25,86.25h1.25" stroke="#333" stroke-opacity="0.55"/><path d="M38.75,86.25h15.00" stroke="#3d6fb5" stroke-opacity="0.8"/><path d="M53.75,86.25h1.25" stroke="#333" stroke-opacity="0.55"/><path d="M20.00,88.75h11.25" stroke="#b54a4a" stroke-opacity="0.8"/><path d="M31.25,88.75h1.25" stroke="#333" stroke-opacity="0.55"/><path d="M33.75,88.75h8.75" stroke="#3d6fb5" stroke-opacity="0.8"/><path d="M42.50,88.75h1.25" stroke="#333" stroke-opacity="0.55"/><path d="M20.00,91.25h11.25" stroke="#b54a4a" stroke-opacity="0.8"/><path d="M31.25,91.25h1.25" stroke="#333" stroke-opacity="0.55"/><path d="M33.75,91.25h13.75" stroke="#3d6fb5" stroke-opacity="0.8"/><path d="M47.50,91.25h1.25" stroke="#333" stroke-opacity="0.55"/><path d="M20.00,93.75h16.25" stroke="#b54a4a" stroke-opacity="0.8"/><path d="M36.25,93.75h1.25" stroke="#333" stroke-opacity="0.55"/><path d="M38.75,93.75h15.00" stroke="#3d6fb5" stroke-opacity="0.8"/><path d="M53.75,93.75h1.25" stroke="#333" stroke-opacity="0.55"/><path d="M20.00,96.25h16.25" stroke="#b54a4a" stroke-opacity="0.8"/><path d="M36.25,96.25h1.25" stroke="#333" stroke-opacity="0.55"/><path d="M38.75,96.25h15.00" stroke="#3d6fb5" stroke-opacity="0.8"/><path d="M53.75,96.25h1.25" stroke="#333" stroke-opacity="0.55"/><path d="M20.00,98.75h8.75" stroke="#b54a4a" stroke-opacity="0.8"/><path d="M28.75,98.75h1.25" stroke="#333" stroke-opacity="0.55"/><path d="M31.25,98.75h6.25" stroke="#3d6fb5" stroke-opacity="0.8"/><path d="M37.50,98.75h1.25" stroke="#333" stroke-opacity="0.55"/><path d="M20.00,101.25h7.50" stroke="#b54a4a" stroke-opacity="0.8"/><path d="M27.50,101.25h1.25" stroke="#333" stroke-opacity="0.55"/><path d="M30.00,101.25h5.00" stroke="#3d6fb5" stroke-opacity="0.8"/><path d="M35.00,101.25h1.25" stroke="#333" stroke-opacity="0.55"/><path d="M20.00,103.75h12.50" stroke="#b54a4a" stroke-opacity="0.8"/><path d="M32.50,103.75h1.25" stroke="#333" stroke-opacity="0.55"/><path d="M35.00,103.75h11.25" stroke="#3d6fb5" stroke-opacity="0.8"/><path d="M46.25,103.75h1.25" stroke="#333" stroke-opacity="0.55"/><path d="M20.00,106.25h18.75" stroke="#b54a4a" stroke-opacity="0.8"/><path d="M38.75,106.25h1.25" stroke="#333" stroke-opacity="0.55"/><path d="M41.25,106.25h18.75" stroke="#3d6fb5" stroke-opacity="0.8"/><path d="M60.00,106.25h1.25" stroke="#333" stroke-opacity="0.55"/><path d="M20.00,108.75h13.75" stroke="#b54a4a" stroke-opacity="0.8"/><path d="M33.75,108.75h1.25" stroke="#333" stroke-opacity="0.55"/><path d="M36.25,108.75h12.50" stroke="#3d6fb5" stroke-opacity="0.8"/><path d="M48.75,108.75h1.25" stroke="#333" stroke-opacity="0.55"/><path d="M20.00,111.25h12.50" stroke="#b54a4a" stroke-opacity="0.8"/><path d="M32.50,111.25h1.25" stroke="#333" stroke-opacity="0.55"/><path d="M35.00,111.25h13.75" stroke="#3d6fb5" stroke-opacity="0.8"/><path d="M48.75,111.25h1.25" stroke="#333" stroke-opacity="0.55"/><path d="M20.00,113.75h18.75" stroke="#b54a4a" stroke-opacity="0.8"/><path d="M38.75,113.75h1.25" stroke="#333" stroke-opacity="0.55"/><path d="M41.25,113.75h20.00" stroke="#3d6fb5" stroke-opacity="0.8"/><path d="M61.25,113.75h1.25" stroke="#333" stroke-opacity="0.55"/><path d="M20.00,116.25h6.25" stroke="#b54a4a" stroke-opacity="0.8"/><path d="M26.25,116.25h1.25" stroke="#333" stroke-opacity="0.55"/><path d="M28.75,116.25h6.25" stroke="#3d6fb5" stroke-opacity="0.8"/><path d="M35.00,116.25h1.25" stroke="#333" stroke-opacity="0.55"/><path d="M20.00,118.75h23.75" stroke="#b54a4a" stroke-opacity="0.8"/><path d="M43.75,118.75h1.25" stroke="#333" stroke-opacity="0.55"/><path d="M46.25,118.75h22.50" stroke="#3d6fb5" stroke-opacity="0.8"/><path d="M15.00,121.25h1.25" stroke="#3f5ff5" stroke-opacity="0.55"/><path d="M16.25,121.25h1.25" stroke="#333" stroke-opacity="0.55"/><path d="M15.00,123.75h25.00" stroke="#b54a4a" stroke-opacity="0.8"/><path d="M40.00,123.75h1.25" stroke="#333" stroke-opacity="0.55"/><path d="M42.50,123.75h1.25" stroke="#3f5ff5" stroke-opacity="0.55"/><path d="M20.00,126.25h23.75" stroke="#3d6fb5" stroke-opacity="0.8"/><path d="M43.75,126.25h1.25" stroke="#333" stroke-opacity="0.55"/><path d="M20.00,128.75h6.25" stroke="#3d6fb5" stroke-opacity="0.8"/><path d="M26.25,128.75h1.25" stroke="#333" stroke-opacity="0.55"/><path d="M20.00,131.25h12.50" stroke="#3d6fb5" stroke-opacity="0.8"/><path d="M32.50,131.25h1.25" stroke="#333" stroke-opacity="0.55"/><path d="M20.00,133.75h18.75" stroke="#3d6fb5" stroke-opacity="0.8"/><path d="M15.00,136.25h1.25" stroke="#3f5ff5" stroke-opacity="0.55"/><path d="M16.25,136.25h1.25" stroke="#333" stroke-opacity="0.55"/><path d="M15.00,138.75h23.75" stroke="#b54a4a" stroke-opacity="0.8"/><path d="M38.75,138.75h1.25" stroke="#333" stroke-opacity="0.55"/><path d="M41.25,138.75h6.25" stroke="#3d6fb5" stroke-opacity="0.8"/><path d="M47.50,138.75h1.25" stroke="#333" stroke-opacity="0.55"/><path d="M15.00,141.25h37.50" stroke="#b54a4a" stroke-opacity="0.8"/><path d="M52.50,141.25h1.25" stroke="#333" stroke-opacity="0.55"/><path d="M55.00,141.25h5.00" stroke="#3d6fb5" stroke-opacity="0.8"/><path d="M60.00,141.25h1.25" stroke="#333" stroke-opacity="0.55"/><path d="M15.00,143.75h41.25" stroke="#b54a4a" stroke-opacity="0.8"/><path d="M56.25,143.75h1.25" stroke="#333" stroke-opacity="0.55"/><path d="M58.75,143.75h5.00" stroke="#3d6fb5" stroke-opacity="0.8"/><path d="M10.00,146.25h1.25" stroke="#8a5a3a" stroke-opacity="0.55"/><path d="M5.00,148.75h1.25" stroke="#5a9a5a" stroke-opacity="0.55"/><path d="M0.00,151.25h1.25" stroke="#3f5ff5" stroke-opacity="0.55"/></g></svg>
<div class="a" style="left:1607px;top:0;width:17px;height:716.5px;background:#fffffe;border-left:1px solid #dddddd"></div>
<div class="a" style="left:1608px;top:0.2px;width:16px;height:2.4px;background:#505050"></div>
</div>
<div class="a" style="left:530.8px;top:455.8px;width:328px;height:32px;border:2px solid #ee8a74"></div>
<div class="a" style="left:0;top:991px;width:2010px;height:7px;background:linear-gradient(rgba(236,236,238,0),rgba(236,236,238,0.85))"></div>
</body></html>
